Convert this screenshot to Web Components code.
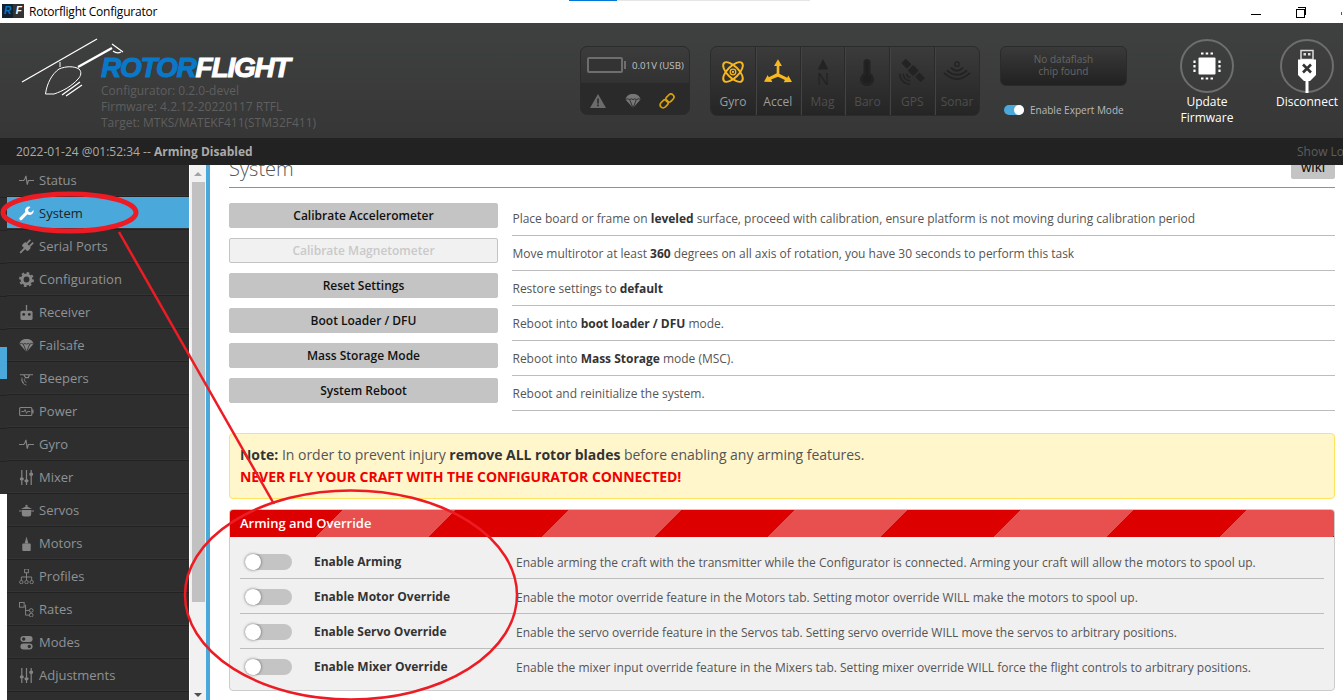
<!DOCTYPE html>
<html>
<head>
<meta charset="utf-8">
<title>Rotorflight Configurator</title>
<style>
html,body{margin:0;padding:0;height:700px;overflow:hidden;background:#fff}
body{position:relative;width:1343px;font-family:"Open Sans","Noto Sans",sans-serif}
</style>
</head>
<body>
<rf-titlebar></rf-titlebar>
<rf-header></rf-header>
<rf-status></rf-status>
<rf-main>
  <rf-nav slot="nav"></rf-nav>
  <rf-system></rf-system>
</rf-main>
<rf-annotations></rf-annotations>

<script>
// icons used by the side menu and the header
const pulse='<path d="M0 8h5l1.2-1.5L7.4 3l1.4 9.5L10 8h6" fill="none" stroke="currentColor" stroke-width="1.2"/>';
const chute='<path d="M.5 6.5C1 3 4 1 8 1s7 2 7.5 5.500L8 15z" fill="currentColor"/><path d="M8 15 4.600 6.500M8 15l3.400-8.500M.5 6.500q2-1.500 4.100 0 1.700-1.300 3.400 0 1.700-1.300 3.400 0 2.100-1.500 4.100 0" fill="none" stroke="#2e2e2e" stroke-width=".9"/>';
const sliders='<path d="M3 0v16M8 0v16M13 0v16" stroke="currentColor" stroke-width="1.300"/><rect x="1" y="8" width="4" height="3" rx="1" fill="currentColor"/><rect x="6" y="10" width="4" height="3" rx="1" fill="currentColor"/><rect x="11" y="3" width="4" height="3" rx="1" fill="currentColor"/>';
const navIcons={
  Status:pulse,
  System:'<path d="M15.500 4.200l-2.700 2.700-2.500-.7-.7-2.500L12.300 1a4.300 4.300 0 0 0-5.600 5.500L.9 12.300a1.600 1.600 0 0 0 2.300 2.300l5.800-5.800a4.300 4.300 0 0 0 6.500-4.600z" fill="#fff"/>',
  "Serial Ports":'<g transform="rotate(45 8 8)" fill="currentColor"><rect x="3.500" y="5.500" width="9" height="5.500" rx="1.500"/><rect x="5" y="0" width="1.800" height="6"/><rect x="9.200" y="0" width="1.800" height="6"/><rect x="7" y="10.500" width="2" height="7"/></g>',
  Configuration:'<circle cx="8" cy="8" r="4.700" fill="none" stroke="currentColor" stroke-width="3.200"/><circle cx="8" cy="8" r="7" fill="none" stroke="currentColor" stroke-width="2" stroke-dasharray="2.750 2.750"/>',
  Receiver:'<rect x="1.500" y="6" width="13" height="10" rx="2" fill="currentColor"/><path d="M8 0v6" stroke="currentColor" stroke-width="1.400"/><circle cx="5" cy="10" r="1.500" fill="#2e2e2e"/><circle cx="11" cy="10" r="1.500" fill="#2e2e2e"/>',
  Failsafe:chute,
  Beepers:'<path d="M1 4h14M5 4l2 3h3l1-3" fill="none" stroke="currentColor" stroke-width="1.300"/><path d="M3 9a6 6 0 0 0 5 6M3 7a8 8 0 0 0 2 6M6 8a3 3 0 0 0 2 4" fill="none" stroke="currentColor" stroke-width=".9"/>',
  Power:'<rect x=".7" y="3.700" width="13" height="8.600" rx="1" fill="none" stroke="currentColor" stroke-width="1.200"/><rect x="14" y="6" width="1.500" height="4" fill="currentColor"/><path d="M2.500 8h3l1-2 1.500 4 1-2h3" fill="none" stroke="currentColor"/>',
  Gyro:pulse,
  Mixer:sliders,
  Servos:'<path d="M3 7.500h10V12a2.500 2.500 0 0 1-2.500 2.500h-5A2.500 2.500 0 0 1 3 12z" fill="currentColor"/><path d="M2 6.500 8 3.500l6 3z" fill="currentColor"/><rect x="7" y="2" width="2" height="2" fill="currentColor"/><path d="M0 8.500h3M13 8.500h3" stroke="currentColor" stroke-width="1.200"/>',
  Motors:'<rect x="3.500" y="8" width="9" height="8" rx="1" fill="currentColor"/><path d="M8 .5 6 8h4z" fill="currentColor"/>',
  Profiles:'<rect x="6" y="0" width="4" height="4" fill="none" stroke="currentColor"/><path d="M8 4v8M2.500 12V8.500h11V12" fill="none" stroke="currentColor"/><circle cx="2.500" cy="14" r="1.800" fill="none" stroke="currentColor"/><circle cx="8" cy="14" r="1.800" fill="none" stroke="currentColor"/><circle cx="13.500" cy="14" r="1.800" fill="none" stroke="currentColor"/>',
  Rates:'<rect x=".5" y=".5" width="5" height="5" fill="none" stroke="currentColor"/><path d="M7 3v11h4M7 9h4" fill="none" stroke="currentColor"/><circle cx="13" cy="9" r="2" fill="none" stroke="currentColor"/><circle cx="13" cy="14" r="2" fill="none" stroke="currentColor"/>',
  Modes:'<rect x="1.500" y="1" width="13" height="6.500" rx="3.200" fill="currentColor"/><circle cx="5" cy="4.200" r="1.800" fill="#2e2e2e"/><rect x="1.500" y="9" width="13" height="6.500" rx="3.200" fill="currentColor"/><circle cx="11" cy="12.200" r="1.800" fill="#2e2e2e"/>',
  Adjustments:sliders
};
const sensorIcons={
  Gyro:'<g fill="none" stroke="currentColor" stroke-width="2.200"><ellipse cx="16" cy="16" rx="14.500" ry="6.500" transform="rotate(45 16 16)"/><ellipse cx="16" cy="16" rx="14.500" ry="6.500" transform="rotate(-45 16 16)"/><circle cx="16" cy="16" r="3.200" stroke-width="1.500"/></g><circle cx="16" cy="16" r="1.300" fill="currentColor"/>',
  Accel:'<g fill="currentColor"><path d="M16 1.500l4.500 7.500h-3v9l9 4.500 1.300-2.600 4.200 7.600-9.500.3 1.400-2.700L16 21.300 8.100 24.600l1.400 2.700-9.500-.3 4.200-7.600 1.300 2.600 9-4.500V9h-3z"/></g>',
  Mag:'<path d="M16 1l6 12H10z" fill="currentColor"/><text x="16" y="31" text-anchor="middle" font-family="Open Sans" font-size="19" fill="currentColor">N</text>',
  Baro:'<path d="M12 5a4 4 0 0 1 8 0v12.500a8 8 0 1 1-8 0z" fill="currentColor"/><circle cx="16" cy="24" r="4.500" fill="#1f1f1f"/><rect x="15" y="5" width="2" height="15" fill="#1f1f1f"/>',
  GPS:'<g fill="currentColor" transform="rotate(45 17 14)"><rect x="13" y="9.500" width="9" height="9"/><rect x="2" y="10.500" width="9" height="7"/><rect x="24" y="10.500" width="9" height="7"/></g><path d="M2 18a12 12 0 0 0 12 12M6 18a8 8 0 0 0 8 8M10 18a4 4 0 0 0 4 4" fill="none" stroke="currentColor" stroke-width="1.800"/>',
  Sonar:'<circle cx="16" cy="7" r="2.500" fill="none" stroke="currentColor" stroke-width="1.500"/><path d="M9 11q7 7 14 0M4.500 14q11.500 10.500 23 0M1 17q15 14 30 0" fill="none" stroke="currentColor" stroke-width="2.200"/>'
};

class RfTitlebar extends HTMLElement{
  constructor(){
    super();
    this.attachShadow({mode:'open'});
    this.shadowRoot.innerHTML=`<style>
    :host{display:block;height:23px;background:#fff;position:relative;overflow:hidden}
    .bar{display:flex;align-items:center;height:23px;font:12px/22px "Open Sans",sans-serif;color:#000}
    .logo{display:flex;width:22px;height:14px;margin:0 5px 1px 2px;font:italic bold 10px/14px "Liberation Sans",sans-serif;letter-spacing:-.5px}
    .logo b{background:#123;color:#0a78c8;width:11px;text-align:center}
    .logo i{background:#333;color:#fff;width:11px;text-align:center}
    .name{width:1222px;letter-spacing:-.22px;flex:none}
    .progress{display:flex;position:absolute;left:569px;top:0;height:1px}
    .progress i:first-child{width:48px;background:#0078d7}
    .progress i:last-child{width:193px;background:#e6e6e6}
    .min{width:10px;height:1px;background:#000;margin:6px 0 0 0;flex:none}
    .max{position:relative;width:9px;height:9px;border:1px solid #000;box-sizing:border-box;margin:4px 0 0 35px;background:#fff;flex:none}
    .max::before{content:"";position:absolute;left:1px;top:-3px;width:7px;height:7px;border:1px solid #000;border-left:0;border-bottom:0}
    .close{width:1px;height:3px;background:#555;margin:3px 0 0 36px;flex:none}
    </style>
    <div class="progress"><i></i><i></i></div>
    <div class="bar">
      <div class="logo"><b>R</b><i>F</i></div>
      <div class="name">Rotorflight Configurator</div>
      <div class="min"></div><div class="max"></div><div class="close"></div>
    </div>`;
  }
}
customElements.define('rf-titlebar',RfTitlebar);

class RfSensor extends HTMLElement{
  constructor(){
    super();
    this.attachShadow({mode:'open'});
    const name=this.getAttribute('name');
    const on=this.hasAttribute('on');
    this.shadowRoot.innerHTML=`<style>
    :host{display:flex;flex-direction:column;align-items:center;width:45px;box-sizing:border-box;border-left:1px solid #2a2a2a;box-shadow:inset 1px 0 0 #434343}
    :host(:first-child){border-left:0;box-shadow:none;width:44px}
    svg{width:28px;height:28px;margin-top:11px;color:${on?'#f7b81f':'#232323'}}
    span{font:12px/16px "Open Sans",sans-serif;margin-top:8px;color:${on?'#9d9d9d':'#4e4e4e'}}
    </style>
    <svg viewBox="0 0 32 32">${sensorIcons[name]}</svg><span>${name}</span>`;
  }
}
customElements.define('rf-sensor',RfSensor);

class RfHeader extends HTMLElement{
  constructor(){
    super();
    this.attachShadow({mode:'open'});
    this.shadowRoot.innerHTML=`<style>
    :host{display:flex;height:115px;background:linear-gradient(#3f4140,#363636);box-sizing:border-box;overflow:hidden;align-items:flex-start}
    .brand{display:flex;width:560px;margin-left:20px;margin-top:13px}
    .heli{width:105px;height:70px;margin-right:-24px;flex:none;overflow:visible}
    .words{margin-top:18px}
    .logo{font:italic bold 28px/28px "Liberation Sans",sans-serif;letter-spacing:-1.2px;color:#fff;-webkit-text-stroke:1px currentColor;height:29px}
    .logo b{color:#0a78c8;font-weight:inherit}
    .ver{font-size:12px;line-height:16px;color:#5f5f5f;white-space:nowrap}
    .batt{width:110px;height:69px;margin-top:23px;border-radius:7px;border:1px solid #2b2b2b;box-sizing:border-box;overflow:hidden;background:#2a2a2a}
    .batt-top{display:flex;align-items:center;height:36px;background:linear-gradient(#3c3c3c,#323232);padding-left:6px;font-size:9.700px;color:#c0c0c0}
    .cell{width:32px;height:12px;border:2px solid #6e6e6e;border-radius:2px;background:#333;position:relative;flex:none}
    .cell::after{content:"";position:absolute;right:-5px;top:2px;width:2px;height:8px;background:#6e6e6e}
    .volt{margin-left:9px;white-space:nowrap}
    .batt-bot{display:flex;justify-content:space-between;align-items:center;padding:4px 14px 0 9px;height:28px}
    .batt-bot svg{width:16px;height:16px;color:#6c6c6c}
    .sensors{display:flex;width:270px;height:70px;margin:23px 0 0 20px;border-radius:7px;border:1px solid #2b2b2b;box-sizing:border-box;overflow:hidden;background:linear-gradient(#3b3b3b,#252525)}
    .flash-col{width:127px;margin:23px 0 0 20px;display:flex;flex-direction:column}
    .flash{height:40px;box-sizing:border-box;border:1px solid #2b2b2b;border-radius:6px;background:linear-gradient(#3a3a3a,#212121);color:#666;font-size:10px;line-height:12px;text-align:center;padding-top:6px}
    .expert{display:flex;align-items:center;margin:17px 0 0 4px;font-size:10px;color:#b9b9b9;white-space:nowrap}
    .sw{width:20px;height:10px;border-radius:5px;background:#4ba8db;margin-right:6px;display:flex;justify-content:flex-end}
    .sw i{width:10px;height:10px;border-radius:5px;background:#fff}
    .act{display:flex;flex-direction:column;align-items:center;margin-top:16px;color:#fff;font-size:12px;line-height:16px;text-align:center;white-space:nowrap}
    .act svg{width:54px;height:54px;margin-bottom:1px}
    .up{width:60px;margin-left:50px}
    .dis{width:70px;margin-left:35px}
    </style>
    <div class="brand">
      <svg class="heli" viewBox="0 0 105 70">
        <g fill="none" stroke="#fff">
          <path d="M2 46 77 3" stroke-width="1.300"/>
          <path d="M58 31 92 12" stroke-width="2.400"/>
          <path d="M92 8l11 8M93 15q4 3 8 1" stroke-width="1.200"/>
          <path d="M40 26v5" stroke-width="1"/>
          <path d="M25.500 58C27 47 32 38 39 33c7-3 15-3 20 0 3 3 2 7-1 10-6 7-15 12-24 15z" stroke-width="1"/>
          <path d="M42 59 60 46M46 60l16-11" stroke-width="1.300"/>
        </g>
      </svg>
      <div class="words">
        <div class="logo"><b>ROTOR</b>FLIGHT</div>
        <div class="ver">Configurator: 0.2.0-devel</div>
        <div class="ver">Firmware: 4.2.12-20220117 RTFL</div>
        <div class="ver">Target: MTKS/MATEKF411(STM32F411)</div>
      </div>
    </div>
    <div class="batt">
      <div class="batt-top"><div class="cell"></div><span class="volt">0.01V (USB)</span></div>
      <div class="batt-bot">
        <svg viewBox="0 0 16 16"><path d="M8 1 16 15H0z" fill="currentColor"/><path d="M7.200 5.500h1.600v5H7.200zM7.200 11.500h1.600v1.700H7.200z" fill="#2a2a2a"/></svg>
        <svg viewBox="0 0 16 16" style="color:#777">${chute.replaceAll('#2e2e2e','#2a2a2a')}</svg>
        <svg viewBox="0 0 16 16" style="color:#d9a20c"><g fill="none" stroke="currentColor" stroke-width="1.700" transform="rotate(-45 8 8)"><rect x="-.5" y="5" width="9" height="6" rx="3"/><rect x="7.500" y="5" width="9" height="6" rx="3"/></g></svg>
      </div>
    </div>
    <div class="sensors">
      <rf-sensor name="Gyro" on></rf-sensor><rf-sensor name="Accel" on></rf-sensor><rf-sensor name="Mag"></rf-sensor><rf-sensor name="Baro"></rf-sensor><rf-sensor name="GPS"></rf-sensor><rf-sensor name="Sonar"></rf-sensor>
    </div>
    <div class="flash-col">
      <div class="flash">No dataflash<br>chip found</div>
      <div class="expert"><div class="sw"><i></i></div>Enable Expert Mode</div>
    </div>
    <div class="act up">
      <svg viewBox="0 0 54 54"><circle cx="27" cy="27" r="26" fill="none" stroke="#6e6e6e" stroke-width="2"/>
        <rect x="18.500" y="18.500" width="17" height="17" rx="1" fill="#fff"/>
        <path d="M21 14.500h2.500M25.700 14.500h2.500M30.500 14.500h2.500M21 39.500h2.500M25.700 39.500h2.500M30.500 39.500h2.500M14.500 21.500v2.500M14.500 26v2.500M14.500 30.500v2.500M39.500 21.500v2.500M39.500 26v2.500M39.500 30.500v2.500" stroke="#fff" stroke-width="2.200" fill="none"/>
      </svg>
      <span>Update<br>Firmware</span>
    </div>
    <div class="act dis">
      <svg viewBox="0 0 54 54"><circle cx="27" cy="27" r="26" fill="none" stroke="#6e6e6e" stroke-width="2"/>
        <path d="M21 11.500h12v9H21z" fill="none" stroke="#ddd" stroke-width="1.500"/><path d="M23.500 14h2.500v2.500h-2.500zM28 14h2.500v2.500H28z" fill="#ddd"/>
        <path d="M18 20.500h18V36l-6 6h-1.500v12h-3V42H24l-6-6z" fill="#fff"/>
        <path d="M23 25.500l8 8M31 25.500l-8 8" stroke="#333" stroke-width="2.600"/>
      </svg>
      <span>Disconnect</span>
    </div>`;
  }
}
customElements.define('rf-header',RfHeader);

class RfStatus extends HTMLElement{
  constructor(){
    super();
    this.attachShadow({mode:'open'});
    this.shadowRoot.innerHTML=`<style>
    :host{display:flex;height:27px;background:#222;align-items:center;justify-content:space-between;padding-left:16px;font-size:12px;color:#aaa;overflow:hidden;white-space:nowrap}
    b{font-weight:700}
    .log{color:#5e5e5e;width:46px;overflow:hidden;flex:none}
    </style>
    <div>2022-01-24 @01:52:34 -- <b>Arming Disabled</b></div><div class="log">Show Log</div>`;
  }
}
customElements.define('rf-status',RfStatus);

class RfMain extends HTMLElement{
  constructor(){
    super();
    this.attachShadow({mode:'open'});
    this.shadowRoot.innerHTML=`<style>
    :host{display:flex;height:535px;overflow:hidden;background:#fff}
    .gutter{width:7px;height:329px;flex:none;background:repeating-linear-gradient(#2e2e2e 0 32px,#222 32px 33px)}
    .gutter i{display:block;height:32px;margin-top:182px;background:#4ba8db}
    .bar{width:17px;flex:none;box-sizing:border-box;border-left:1px solid #fff;background:#f1f1f1;display:flex;flex-direction:column;align-items:center;padding-left:0}
    .up{width:0;height:0;border:4px solid transparent;border-top:0;border-bottom:4px solid #a3a3a3;margin-top:7px}
    .thumb{width:13px;height:420px;background:#c1c1c1;margin-top:6px}
    .down{width:0;height:0;border:4px solid transparent;border-bottom:0;border-top:4px solid #505050;margin-top:91px}
    .line{width:4px;flex:none;background:#4ba8db}
    .page{flex:1;min-width:0}
    </style>
    <div class="gutter"><i></i></div>
    <slot name="nav"></slot>
    <div class="bar"><div class="up"></div><div class="thumb"></div><div class="down"></div></div>
    <div class="line"></div>
    <div class="page"><slot></slot></div>`;
  }
}
customElements.define('rf-main',RfMain);

class RfNavItem extends HTMLElement{
  constructor(){
    super();
    this.attachShadow({mode:'open'});
    const name=this.getAttribute('name');
    const on=this.hasAttribute('active');
    this.shadowRoot.innerHTML=`<style>
    :host{display:flex;align-items:center;height:33px;box-sizing:border-box;padding-left:12px;border-bottom:1px solid #222;box-shadow:inset 0 -1px 0 #343434;background:${on?'#4ba8db':'transparent'};color:${on?'#222':'#8f9296'};font-size:13px;white-space:nowrap}
    svg{width:15px;height:15px;margin-right:5px;color:#858585;flex:none}
    </style>
    <svg viewBox="0 0 16 16">${navIcons[name]}</svg><span>${name}</span>`;
  }
}
customElements.define('rf-nav-item',RfNavItem);

class RfNav extends HTMLElement{
  constructor(){
    super();
    this.attachShadow({mode:'open'});
    const names=Object.keys(navIcons);
    this.shadowRoot.innerHTML=`<style>
    :host{display:block;width:182px;flex:none;background:#2e2e2e;overflow:hidden}
    .list{margin-top:-1px}
    </style>
    <div class="list">${names.map(n=>`<rf-nav-item name="${n}"${n=='System'?' active':''}></rf-nav-item>`).join('')}</div>`;
  }
}
customElements.define('rf-nav',RfNav);

class RfSystemRow extends HTMLElement{
  constructor(){
    super();
    this.attachShadow({mode:'open'});
    const off=this.hasAttribute('disabled');
    this.shadowRoot.innerHTML=`<style>
    :host{display:flex;height:35px}
    .btn{width:269px;height:25px;margin-top:2px;box-sizing:border-box;border-radius:2px;text-align:center;font-size:12px;font-weight:600;line-height:23px;background:${off?'#f1f1f1':'#c4c4c4'};color:${off?'#c9c9c9':'#111'};border:1px solid #c4c4c4}
    .desc{flex:1;margin-left:14px;box-sizing:border-box;border-bottom:1px solid #bdbdbd;font-size:12px;line-height:36px;color:#555;padding-left:.5px;white-space:nowrap;letter-spacing:-.015px;height:35px}
    </style>
    <div class="btn">${this.getAttribute('label')}</div><div class="desc"><slot></slot></div>`;
  }
}
customElements.define('rf-system-row',RfSystemRow);

class RfSwitchRow extends HTMLElement{
  constructor(){
    super();
    this.attachShadow({mode:'open'});
    this.shadowRoot.innerHTML=`<style>
    :host{display:grid;grid-template-columns:74px 202px 1fr;align-items:center;height:35px;box-sizing:border-box;border-bottom:1px solid #bdbdbd;font-size:12px;white-space:nowrap}
    :host(:last-child){border-bottom:1px solid transparent}
    .sw{width:47px;height:16px;border-radius:8px;background:#c4c4c4;margin-left:5px;margin-top:1px}
    .sw i{display:block;width:16px;height:16px;border-radius:8px;background:#fff;box-shadow:0 0 3px rgba(0,0,0,.55)}
    .name{font-weight:700;color:#333}
    .desc{color:#555;padding-top:2px}
    </style>
    <div class="sw"><i></i></div><div class="name">${this.getAttribute('label')}</div><div class="desc"><slot></slot></div>`;
  }
}
customElements.define('rf-switch-row',RfSwitchRow);

class RfNote extends HTMLElement{
  constructor(){
    super();
    this.attachShadow({mode:'open'});
    this.shadowRoot.innerHTML=`<style>
    :host{display:block;margin-top:22px;height:66px;box-sizing:border-box;padding:10px;border:1px solid #ffe45f;border-radius:4px;background:#fff6cc;font-size:14px;line-height:22px;color:#555;letter-spacing:-.02px}
    </style><slot></slot>`;
  }
}
customElements.define('rf-note',RfNote);

class RfPanel extends HTMLElement{
  constructor(){
    super();
    this.attachShadow({mode:'open'});
    this.shadowRoot.innerHTML=`<style>
    :host{display:block;margin-top:10px;height:182px;box-sizing:border-box;border:1px solid #ccc;border-radius:4px;background:#f0f0f0;overflow:hidden}
    .head{height:27px;background:repeating-linear-gradient(135deg,#dc0000 0 79.9px,#e84f4f 79.9px 159.8px);color:#fff;font-size:13px;font-weight:600;line-height:27px;padding-left:10px}
    .body{padding:7px 10px}
    </style>
    <div class="head">${this.getAttribute('title')}</div><div class="body"><slot></slot></div>`;
  }
}
customElements.define('rf-panel',RfPanel);

class RfSystem extends HTMLElement{
  constructor(){
    super();
    this.attachShadow({mode:'open'});
    this.shadowRoot.innerHTML=`<style>
    :host{display:block;padding:0 8px 0 19px}
    .title{display:flex;justify-content:space-between;align-items:flex-start;margin-top:-10px;height:32px;margin-bottom:13px;border-bottom:1px solid #4ba8db;box-sizing:content-box}
    h2{margin:0;font-size:20px;font-weight:300;line-height:27px;color:#555}
    .wiki{width:44px;height:24px;background:#c4c4c4;border-radius:2px;text-align:center;font-size:11px;font-weight:600;line-height:26px;color:#111}
    b{font-weight:700;color:#333}
    .warn{color:#f00000;letter-spacing:-.05px}
    </style>
    <div class="title"><h2>System</h2><div class="wiki">WIKI</div></div>
    <rf-system-row label="Calibrate Accelerometer">Place board or frame on <b>leveled</b> surface, proceed with calibration, ensure platform is not moving during calibration period</rf-system-row>
    <rf-system-row label="Calibrate Magnetometer" disabled>Move multirotor at least <b>360</b> degrees on all axis of rotation, you have 30 seconds to perform this task</rf-system-row>
    <rf-system-row label="Reset Settings">Restore settings to <b>default</b></rf-system-row>
    <rf-system-row label="Boot Loader / DFU">Reboot into <b>boot loader / DFU</b> mode.</rf-system-row>
    <rf-system-row label="Mass Storage Mode">Reboot into <b>Mass Storage</b> mode (MSC).</rf-system-row>
    <rf-system-row label="System Reboot">Reboot and reinitialize the system.</rf-system-row>
    <rf-note><b>Note:</b> In order to prevent injury <b>remove ALL rotor blades</b> before enabling any arming features.<br><b class="warn">NEVER FLY YOUR CRAFT WITH THE CONFIGURATOR CONNECTED!</b></rf-note>
    <rf-panel title="Arming and Override">
      <rf-switch-row label="Enable Arming">Enable arming the craft with the transmitter while the Configurator is connected. Arming your craft will allow the motors to spool up.</rf-switch-row>
      <rf-switch-row label="Enable Motor Override">Enable the motor override feature in the Motors tab. Setting motor override WILL make the motors to spool up.</rf-switch-row>
      <rf-switch-row label="Enable Servo Override">Enable the servo override feature in the Servos tab. Setting servo override WILL move the servos to arbitrary positions.</rf-switch-row>
      <rf-switch-row label="Enable Mixer Override">Enable the mixer input override feature in the Mixers tab. Setting mixer override WILL force the flight controls to arbitrary positions.</rf-switch-row>
    </rf-panel>`;
  }
}
customElements.define('rf-system',RfSystem);

// red marks drawn over the screenshot
class RfAnnotations extends HTMLElement{
  constructor(){
    super();
    this.attachShadow({mode:'open'});
    this.shadowRoot.innerHTML=`<style>
    :host{position:absolute;left:0;top:0;width:1343px;height:700px;pointer-events:none}
    svg{display:block}
    </style>
    <svg width="1343" height="700" fill="none" stroke="#ed1c24">
      <ellipse cx="69.500" cy="212.500" rx="66.500" ry="18.500" stroke-width="5"/>
      <path d="M119 232 274 504" stroke-width="2.500"/>
      <ellipse cx="351" cy="595" rx="166" ry="104.500" stroke-width="2.500"/>
    </svg>`;
  }
}
customElements.define('rf-annotations',RfAnnotations);
</script>
</body>
</html>
